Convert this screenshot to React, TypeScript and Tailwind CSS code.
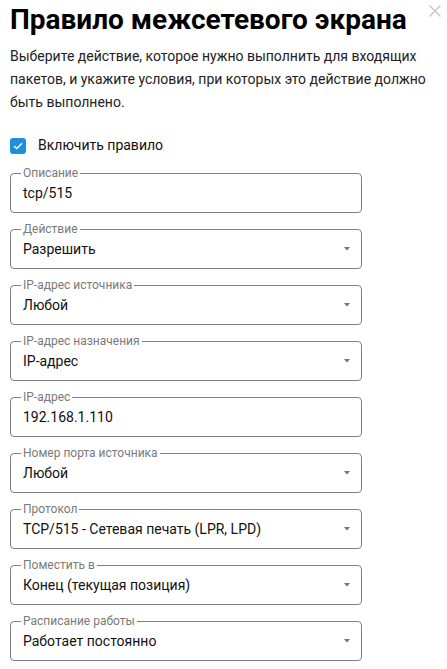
import React from "react";

const fields: { label: string; value: string; select: boolean }[] = [
  { label: "Описание", value: "tcp/515", select: false },
  { label: "Действие", value: "Разрешить", select: true },
  { label: "IP-адрес источника", value: "Любой", select: true },
  { label: "IP-адрес назначения", value: "IP-адрес", select: true },
  { label: "IP-адрес", value: "192.168.1.110", select: false },
  { label: "Номер порта источника", value: "Любой", select: true },
  { label: "Протокол", value: "TCP/515 - Сетевая печать (LPR, LPD)", select: true },
  { label: "Поместить в", value: "Конец (текущая позиция)", select: true },
  { label: "Расписание работы", value: "Работает постоянно", select: true },
];

function Field({ label, value, select }: { label: string; value: string; select: boolean }) {
  return (
    <div className="relative h-[40px] w-[352px] rounded-[4px] border border-[#808080] flex items-center pl-[12px] pr-[10px]">
      <span className="absolute -top-[8px] left-[10px] bg-white px-[2px] text-[12px] leading-[14px] text-[#7a7a7a]">
        {label}
      </span>
      <span className="flex-1 text-[14px] text-[#111]">{value}</span>
      {select && (
        <svg width="6" height="4" viewBox="0 0 6 4" className="mr-[1px]">
          <path d="M0 0 H6 L3 3.5 Z" fill="#777" />
        </svg>
      )}
    </div>
  );
}

export default function App() {
  return (
    <div
      className="relative w-[447px] h-[669px] bg-white px-[10px] pt-[4px] overflow-hidden"
      style={{ fontFamily: "Roboto, 'Noto Sans', sans-serif" }}
    >
      <svg
        width="12"
        height="12"
        viewBox="0 0 12 12"
        className="absolute right-[6px] top-[5px]"
      >
        <path d="M0.5 0.5 L11.5 11.5 M11.5 0.5 L0.5 11.5" stroke="#c4c4c4" strokeWidth="1.4" />
      </svg>
      <h1 className="text-[28px] leading-[32px] font-bold text-black">Правило межсетевого экрана</h1>
      <p className="mt-[9px] text-[14px] leading-[23px] text-[#222] pr-[10px]">
        Выберите действие, которое нужно выполнить для входящих пакетов, и укажите условия, при которых это действие должно быть выполнено.
      </p>
      <div className="mt-[21px] flex items-center gap-[12px]">
        <div className="h-[16px] w-[16px] rounded-[3px] bg-[#1e8fdc] flex items-center justify-center">
          <svg width="10" height="8" viewBox="0 0 10 8">
            <path d="M1 4 L3.8 6.6 L9 1.2" stroke="white" strokeWidth="1.4" fill="none" />
          </svg>
        </div>
        <span className="text-[14px] text-[#111]">Включить правило</span>
      </div>
      <div className="mt-[17px] flex flex-col gap-[16px]">
        {fields.map((f) => (
          <Field key={f.label} {...f} />
        ))}
      </div>
    </div>
  );
}
